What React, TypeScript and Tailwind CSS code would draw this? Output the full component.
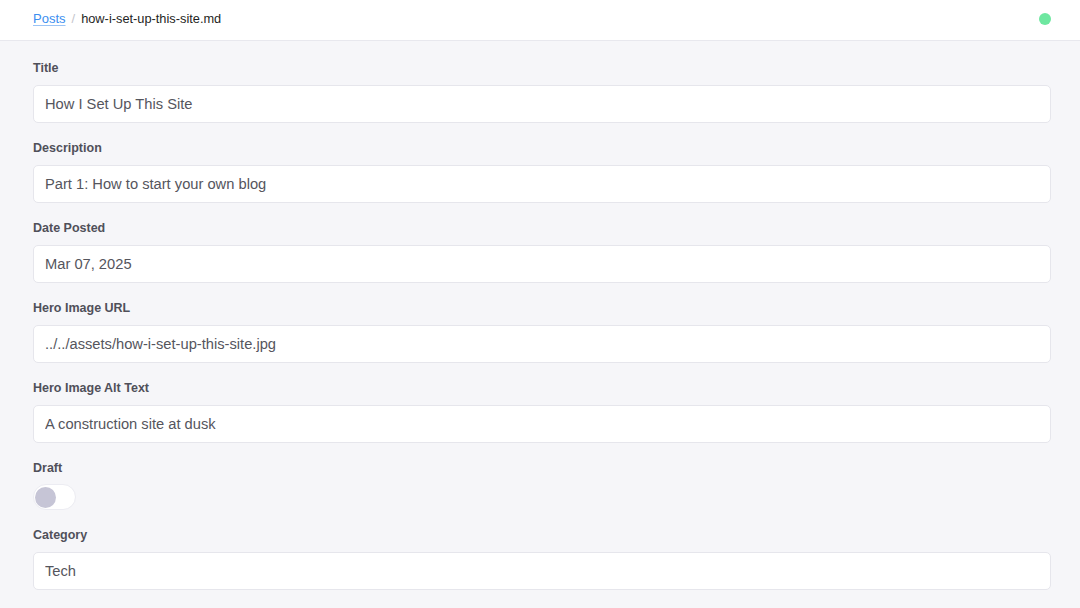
import React, {useState} from 'react';

interface Field {
    label: string;
    value: string;
}

const fields: Field[] = [
    {label: 'Title', value: 'How I Set Up This Site'},
    {label: 'Description', value: 'Part 1: How to start your own blog'},
    {label: 'Date Posted', value: 'Mar 07, 2025'},
    {label: 'Hero Image URL', value: '../../assets/how-i-set-up-this-site.jpg'},
    {label: 'Hero Image Alt Text', value: 'A construction site at dusk'},
];

function TextField({label, value}: Field) {
    const [text, setText] = useState(value);
    return (
        <div className="flex flex-col">
            <label className="text-[12.5px] leading-[17px] font-semibold text-[#505059] mb-[8px]">{label}</label>
            <input
                value={text}
                onChange={(e) => setText(e.target.value)}
                className="h-[38px] w-full rounded-[5px] border border-[#e6e6ec] bg-white px-[11px] text-[14.7px] text-[#55555d] outline-none"
            />
        </div>
    );
}

export default function App() {
    const [draft, setDraft] = useState(false);

    return (
        <div className="min-h-screen bg-[#f6f6f9] font-['Liberation_Sans',Arial,sans-serif]">
            {/* Header */}
            <div className="h-[41px] bg-white border-b border-[#e8e8ee] flex items-center justify-between pl-[33px] pr-[29px] pb-[2px]">
                <div className="flex items-center text-[13px] gap-[6px]">
                    <a href="#" className="text-[#3b8ef0] underline decoration-[#9cc4f5] underline-offset-2">Posts</a>
                    <span className="text-[#c5c5cc]">/</span>
                    <span className="text-[#1f1f24] text-[12.8px]">how-i-set-up-this-site.md</span>
                </div>
                <span className="h-3 w-3 rounded-full bg-[#6ee7a0]"></span>
            </div>

            {/* Form */}
            <div className="flex flex-col gap-[17px] pt-[19px] pl-[33px] pr-[29px] pb-6">
                {fields.map((f) => (
                    <TextField key={f.label} label={f.label} value={f.value}/>
                ))}

                <div className="flex flex-col">
                    <label className="text-[12.5px] leading-[17px] font-semibold text-[#505059] mb-[7px]">Draft</label>
                    <button
                        onClick={() => setDraft(!draft)}
                        className={`h-[26px] w-[43px] rounded-full border border-[#ececf2] flex items-center px-[1px] ${draft ? 'bg-[#6ee7a0] justify-end' : 'bg-white justify-start'}`}
                    >
                        <span className="h-[21px] w-[21px] rounded-full bg-[#c6c5d6]"></span>
                    </button>
                </div>

                <TextField label="Category" value="Tech"/>
            </div>
        </div>
    );
}
